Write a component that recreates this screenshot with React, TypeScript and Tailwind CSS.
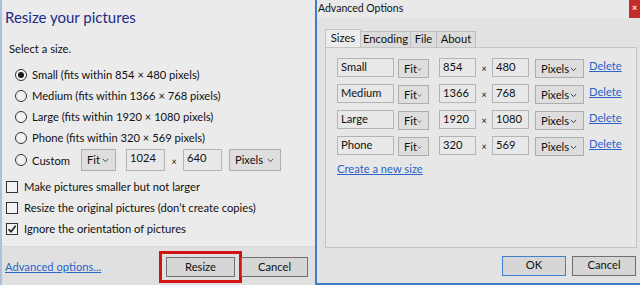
const font = { fontFamily: 'Lato, "Noto Sans", sans-serif' }

function Radio({ checked }: { checked?: boolean }) {
  return (
    <span className="flex h-[12px] w-[12px] shrink-0 items-center justify-center rounded-full border border-[#333333] bg-[#f2f2f2]">
      {checked && <span className="h-[6px] w-[6px] rounded-full bg-[#1a1a1a]" />}
    </span>
  )
}

function Check({ checked }: { checked?: boolean }) {
  return (
    <span className="flex h-[12px] w-[12px] shrink-0 items-center justify-center border border-[#333333] bg-[#f2f2f2]">
      {checked && (
        <svg width="10" height="10" viewBox="0 0 10 10">
          <path d="M1.5 5.2 L4 7.8 L8.7 1.8" fill="none" stroke="#1a1a1a" strokeWidth="1.6" />
        </svg>
      )}
    </span>
  )
}

function Select({ label, w, h = 'h-[19px]' }: { label: string; w: string; h?: string }) {
  return (
    <div className={`${w} ${h} flex shrink-0 items-center justify-between border border-[#adadad] bg-[#dedede] pl-[5px] pr-[6px] pt-[1px] text-[#111]`}>
      <span>{label}</span>
      <svg width="7" height="5" viewBox="0 0 7 5">
        <path d="M0.8 1 L3.5 3.6 L6.2 1" fill="none" stroke="#444" strokeWidth="1" />
      </svg>
    </div>
  )
}

function Field({ value, w, h = 'h-[19px]' }: { value: string; w: string; h?: string }) {
  return (
    <div className={`${w} ${h} flex shrink-0 items-start border border-[#b4b4b4] bg-[#e8e8e8] px-[3px] leading-[15px] text-[#111]`}>
      {value}
    </div>
  )
}

function Button({ label, w, blue }: { label: string; w: string; blue?: boolean }) {
  return (
    <div
      className={`${w} flex h-[20px] shrink-0 items-center justify-center border ${
        blue ? 'border-[#3c7fd1]' : 'border-[#707070]'
      } bg-[#d6d6d6] text-[#111]`}
    >
      {label}
    </div>
  )
}

const options = [
  'Small (fits within 854 × 480 pixels)',
  'Medium (fits within 1366 × 768 pixels)',
  'Large (fits within 1920 × 1080 pixels)',
  'Phone (fits within 320 × 569 pixels)',
]

const sizes = [
  ['Small', '854', '480'],
  ['Medium', '1366', '768'],
  ['Large', '1920', '1080'],
  ['Phone', '320', '569'],
]

export default function App() {
  return (
    <div className="flex h-[285px] w-[640px] overflow-hidden bg-[#e4e4e4] text-[11.2px] text-[#111]" style={font}>
      {/* resize dialog */}
      <div className="flex w-[315px] shrink-0 flex-col border-l-2 border-[#a9c3df]">
        <div className="flex flex-1 flex-col bg-[#ebebeb]">
          <div className="pl-[3px] pt-[6px] text-[15px] leading-[22px] text-[#1c2a8c]">Resize your pictures</div>
          <div className="pl-[7px] pt-[13px] leading-[16px]">Select a size.</div>
          <div className="flex flex-col gap-[5px] pl-[13px] pt-[10px]">
            {options.map((o, i) => (
              <div key={o} className="flex h-[16px] items-center gap-[5px]">
                <Radio checked={i === 0} />
                <span>{o}</span>
              </div>
            ))}
          </div>
          <div className="flex items-center pl-[13px] pt-[3px]">
            <Radio />
            <span className="ml-[5px] mt-[3px]">Custom</span>
            <div className="ml-[11px]">
              <Select label="Fit" w="w-[35px]" h="h-[22px]" />
            </div>
            <div className="ml-[10px]">
              <Field value="1024" w="w-[39px]" h="h-[22px]" />
            </div>
            <span className="mt-[3px] w-[18px] text-center text-[9px]">×</span>
            <Field value="640" w="w-[39px]" h="h-[22px]" />
            <div className="ml-[7px]">
              <Select label="Pixels" w="w-[52px]" h="h-[22px]" />
            </div>
          </div>
          <div className="flex flex-col gap-[5px] pl-[4px] pt-[8px]">
            {[
              ['Make pictures smaller but not larger', false],
              ['Resize the original pictures (don\u2019t create copies)', false],
              ['Ignore the orientation of pictures', true],
            ].map(([t, c]) => (
              <div key={t as string} className="flex h-[16px] items-center gap-[6px]">
                <Check checked={c as boolean} />
                <span>{t as string}</span>
              </div>
            ))}
          </div>
        </div>
        <div className="flex h-[39px] shrink-0 items-center border-t border-[#d8d8d8] bg-[#e0e0e0] pl-[3px] pt-[2px]">
          <span className="w-[154px] whitespace-nowrap text-[#2b63c9] underline">Advanced options...</span>
          <div className="flex h-[32px] w-[83px] items-center justify-center border-[3px] border-[#d01414]">
            <Button label="Resize" w="w-[69px]" />
          </div>
          <div className="-ml-[1px]">
            <Button label="Cancel" w="w-[67px]" />
          </div>
        </div>
      </div>

      {/* advanced options dialog */}
      <div className="flex flex-1 flex-col border-b-2 border-l-2 border-[#3d7cc9]">
        <div className="flex h-[18px] shrink-0 items-start bg-[#e9e9e9] pl-[1px]">
          <span className="pt-[1px] text-[10.5px] leading-[14px]">Advanced Options</span>
          <div className="ml-auto flex h-[19px] w-[11px] items-start justify-center bg-[#c42b2b] pt-[3px] text-[9px] font-bold leading-none text-white">
            ×
          </div>
        </div>
        <div className="flex flex-1 flex-col bg-[#e2e2e2] pl-[8px] pr-[3px]">
          <div className="mt-[11px] flex h-[18px] items-end">
            <div className="flex h-[18px] w-[36px] items-center justify-center border border-b-0 border-[#c4c4c4] bg-[#ececec]">
              Sizes
            </div>
            {[
              ['Encoding', 'w-[50px]'],
              ['File', 'w-[26px]'],
              ['About', 'w-[39px]'],
            ].map(([t, w]) => (
              <div key={t} className={`${w} flex h-[16px] items-center justify-center border border-b-0 border-l-0 border-[#bdbdbd] bg-[#dcdcdc]`}>
                {t}
              </div>
            ))}
          </div>
          <div className="flex h-[201px] flex-col border border-[#c4c4c4] bg-[#e7e7e7] pl-[11px] pt-[10px]">
            <div className="flex flex-col gap-[6px]">
              {sizes.map(([n, w, h]) => (
                <div key={n} className="flex items-start">
                  <Field value={n} w="w-[57px]" />
                  <div className="ml-[4px] mt-[1px]">
                    <Select label="Fit" w="w-[31px]" />
                  </div>
                  <div className="ml-[10px]">
                    <Field value={w} w="w-[37px]" />
                  </div>
                  <span className="mt-[4px] w-[16px] text-center text-[9px]">×</span>
                  <Field value={h} w="w-[37px]" />
                  <div className="ml-[6px] mt-[1px]">
                    <Select label="Pixels" w="w-[49px]" />
                  </div>
                  <span className="ml-[5px] text-[#2b63c9] underline">Delete</span>
                </div>
              ))}
            </div>
            <span className="mt-[5px] text-[#2b63c9] underline">Create a new size</span>
          </div>
          <div className="flex flex-1 items-center justify-end gap-[6px] pr-[1px]">
            <Button label="OK" w="w-[64px]" blue />
            <Button label="Cancel" w="w-[64px]" />
          </div>
        </div>
      </div>
    </div>
  )
}
